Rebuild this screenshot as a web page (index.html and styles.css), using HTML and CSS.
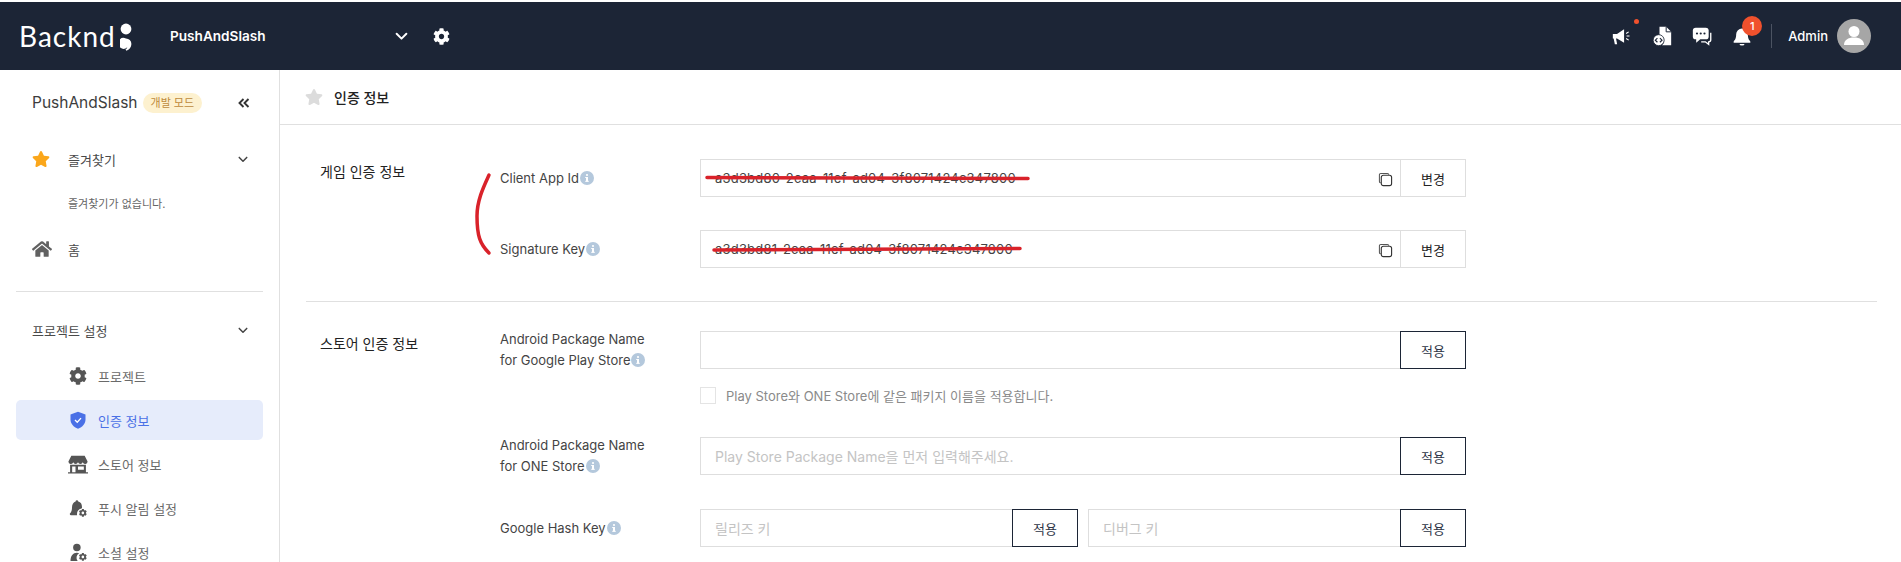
FILE: index.html
```html
<!DOCTYPE html>
<html lang="ko">
<head>
  <meta charset="utf-8" />
  <title>인증 정보</title>
  <link rel="stylesheet" href="styles.css">
</head>
<body>
<svg class="defs" width="0" height="0">
  <symbol id="i-star" viewBox="0 0 576 512"><path d="M259.3 17.8L194 150.2 47.9 171.5c-26.2 3.8-36.7 36.1-17.7 54.6l105.7 103-25 145.5c-4.5 26.3 23.2 46 46.4 33.7L288 439.6l130.7 68.7c23.2 12.2 50.9-7.4 46.4-33.7l-25-145.5 105.7-103c19-18.5 8.5-50.8-17.7-54.6L382 150.2 316.7 17.8c-11.7-23.6-45.6-23.9-57.4 0z"/></symbol>
  <symbol id="i-cog" viewBox="0 0 512 512"><path d="M487.4 315.7l-42.6-24.6c4.3-23.2 4.3-47 0-70.2l42.6-24.6c4.9-2.8 7.1-8.6 5.5-14-11.1-35.6-30-67.8-54.7-94.6-3.8-4.1-10-5.1-14.8-2.3L380.8 110c-17.9-15.4-38.5-27.3-60.8-35.1V25.8c0-5.6-3.9-10.5-9.4-11.7-36.7-8.2-74.3-7.8-109.2 0-5.5 1.2-9.4 6.1-9.4 11.7V75c-22.2 7.9-42.8 19.8-60.8 35.1L88.7 85.5c-4.9-2.8-11-1.9-14.8 2.3-24.7 26.7-43.6 58.9-54.7 94.6-1.7 5.4.6 11.2 5.5 14L67.3 221c-4.3 23.2-4.3 47 0 70.2l-42.6 24.6c-4.9 2.8-7.1 8.6-5.5 14 11.1 35.6 30 67.8 54.7 94.6 3.8 4.1 10 5.1 14.8 2.3l42.6-24.6c17.9 15.4 38.5 27.3 60.8 35.1v49.2c0 5.6 3.9 10.5 9.4 11.7 36.7 8.2 74.3 7.8 109.2 0 5.5-1.2 9.4-6.1 9.4-11.7v-49.2c22.2-7.9 42.8-19.8 60.8-35.1l42.6 24.6c4.9 2.8 11 1.9 14.8-2.3 24.7-26.7 43.6-58.9 54.7-94.6 1.5-5.5-.7-11.3-5.6-14.1zM256 336c-44.1 0-80-35.9-80-80s35.9-80 80-80 80 35.9 80 80-35.9 80-80 80z"/></symbol>
  <symbol id="i-home" viewBox="0 0 576 512"><path d="M280.37 148.26L96 300.11V464a16 16 0 0 0 16 16l112.06-.29a16 16 0 0 0 15.92-16V368a16 16 0 0 1 16-16h64a16 16 0 0 1 16 16v95.64a16 16 0 0 0 16 16.05L464 480a16 16 0 0 0 16-16V300L295.67 148.26a12.19 12.19 0 0 0-15.3 0zM571.6 251.47L488 182.56V44.05a12 12 0 0 0-12-12h-56a12 12 0 0 0-12 12v72.61L318.47 43a48 48 0 0 0-61 0L4.34 251.47a12 12 0 0 0-1.6 16.9l25.5 31A12 12 0 0 0 45.15 301l235.22-193.74a12.19 12.19 0 0 1 15.3 0L530.9 301a12 12 0 0 0 16.9-1.6l25.5-31a12 12 0 0 0-1.7-16.93z"/></symbol>
  <symbol id="i-chev" viewBox="0 0 12 8"><path d="M1.5 1.5L6 6l4.5-4.5" fill="none" stroke="currentColor" stroke-width="1.8" stroke-linecap="round" stroke-linejoin="round"/></symbol>
  <symbol id="i-info" viewBox="0 0 14 14"><circle cx="7" cy="7" r="7" fill="#b4c8dc"/><rect x="6" y="6" width="2" height="4.5" fill="#fff"/><rect x="5.2" y="6" width="2" height="1" fill="#fff"/><rect x="5.2" y="9.8" width="3.6" height="1" fill="#fff"/><circle cx="7" cy="4" r="1.1" fill="#fff"/></symbol>
  <symbol id="i-copy" viewBox="0 0 16 16"><path d="M3 11.5A1.5 1.5 0 0 1 1.5 10V3A1.5 1.5 0 0 1 3 1.5h7A1.5 1.5 0 0 1 11.5 3" fill="none" stroke="#555" stroke-width="1.1"/><rect x="3.5" y="3.5" width="11" height="11" rx="2.2" fill="#fff" stroke="#333" stroke-width="1.2"/></symbol>
</svg>

<header class="topbar">
  <div class="logo">
    <span class="logo-text">Backnd</span>
    <svg class="logo-mark" viewBox="0 0 12 28"><circle cx="6" cy="6" r="5.4"/><path d="M6 15.5a5.4 5.4 0 0 1 5.4 5.4c0 3.4-2.2 5.8-5 6.8l-.9-1.3c1-.6 1.6-1.2 1.8-2.1A5.4 5.4 0 1 1 6 15.5z"/></svg>
  </div>
  <div class="project-select">
    <span>PushAndSlash</span>
    <svg class="chev"><use href="#i-chev"/></svg>
  </div>
  <svg class="top-cog"><use href="#i-cog"/></svg>

  <div class="top-right">
    <div class="top-icon">
      <svg viewBox="0 0 24 24"><path d="M1 9.5h5L14.5 4v16L6 15H4.8l1.4 6.8H3.4L2 15H1z" fill="#fff"/><path d="M17 9l3-2M17.5 12h3.5M17 15l3 2" stroke="#fff" stroke-width="1.3"/></svg>
      <i class="dot"></i>
    </div>
    <div class="top-icon">
      <svg viewBox="0 0 24 24"><path d="M9 1h8l6 6v16H12a7 7 0 0 0-3-12z" fill="#fff"/><path d="M17 1v6h6" fill="none" stroke="#1c2536" stroke-width="1.2"/><circle cx="8" cy="17" r="6.6" fill="#fff" stroke="#1c2536" stroke-width="1"/><path d="M6.5 14.5L4 17l2.5 2.5M9.5 14.5L12 17l-2.5 2.5" fill="none" stroke="#1c2536" stroke-width="1.4"/></svg>
    </div>
    <div class="top-icon">
      <svg viewBox="0 0 24 24"><rect x="1" y="2" width="19" height="14" rx="3.5" fill="#fff"/><path d="M5 15v5l5-4z" fill="#fff"/><circle cx="6" cy="9" r="1.3" fill="#1c2536"/><circle cx="10.5" cy="9" r="1.3" fill="#1c2536"/><circle cx="15" cy="9" r="1.3" fill="#1c2536"/><path d="M22.5 8v8.5a2.5 2.5 0 0 1-2.5 2.5v3l-4-3h-5" fill="none" stroke="#fff" stroke-width="1.6"/></svg>
    </div>
    <div class="top-icon">
      <svg viewBox="0 0 24 24"><path d="M12 3a7 7 0 0 1 7 7c0 5 1.5 7 3 8.5V20H2v-1.5C3.500 17 5 15 5 10a7 7 0 0 1 7-7z" fill="#fff"/><path d="M9 21.500h6a3 2 0 0 1-6 0z" fill="#fff"/></svg>
      <b class="count">1</b>
    </div>
    <span class="top-sep"></span>
    <span class="admin">Admin</span>
    <span class="avatar">
      <svg viewBox="0 0 34 34"><circle cx="17" cy="12.500" r="5.500" fill="#fff"/><path d="M7 26c0-5 4-7.500 10-7.500S27 21 27 26z" fill="#fff"/></svg>
    </span>
  </div>
</header>

<div class="layout">
  <aside class="sidebar">
    <div class="side-title">
      <span class="side-name">PushAndSlash</span>
      <span class="badge">개발 모드</span>
      <svg class="collapse" viewBox="0 0 12 10"><path d="M5.500 1L1.500 5l4 4M10.500 1l-4 4 4 4" fill="none" stroke="#333" stroke-width="1.9"/></svg>
    </div>

    <div class="nav-row">
      <svg class="nav-icon star"><use href="#i-star"/></svg>
      <span>즐겨찾기</span>
      <svg class="chev"><use href="#i-chev"/></svg>
    </div>
    <p class="nav-empty">즐겨찾기가 없습니다.</p>
    <div class="nav-row home-row">
      <svg class="nav-icon home"><use href="#i-home"/></svg>
      <span>홈</span>
    </div>

    <hr class="side-line" />

    <div class="nav-row group-row">
      <span>프로젝트 설정</span>
      <svg class="chev"><use href="#i-chev"/></svg>
    </div>

    <ul class="sub-nav">
      <li>
        <svg class="sub-icon"><use href="#i-cog"/></svg>
        <span>프로젝트</span>
      </li>
      <li class="active">
        <svg class="sub-icon" viewBox="0 0 24 24"><path d="M12 1l10 3.500V11c0 6-4 10.500-10 12.500C6 21.500 2 17 2 11V4.500z" fill="#4a70e6"/><path d="M8 12l3 3 5-5.500" fill="none" stroke="#fff" stroke-width="1.800"/></svg>
        <span>인증 정보</span>
      </li>
      <li>
        <svg class="sub-icon store-icon" viewBox="0 0 24 24"><path d="M4 2h16l3.500 7a3 3 0 0 1-5.800 1 3 3 0 0 1-5.700 0 3 3 0 0 1-5.700 0A3 3 0 0 1 .500 9z" fill="#555"/><path d="M2.500 13h19v9H24v1.500H0V22h2.500zM5 15v7h4v-7zm7 0v4h7v-4z" fill="#555"/></svg>
        <span>스토어 정보</span>
      </li>
      <li>
        <svg class="sub-icon" viewBox="0 0 24 24"><path d="M10.500 1.500a1.800 1.800 0 0 1 1.800 1.700c3.400.8 5 3.500 5 7v2a8 8 0 0 0-6.500 9.300H2.500a1.500 1.500 0 0 1-1-2.500C3 17.500 4 15.500 4 11c0-4 2-7 4.800-7.800a1.800 1.800 0 0 1 1.700-1.700z" fill="#555"/><use href="#i-cog" x="13" y="13" width="11" height="11" fill="#555"/></svg>
        <span>푸시 알림 설정</span>
      </li>
      <li>
        <svg class="sub-icon" viewBox="0 0 24 24"><circle cx="10.500" cy="6" r="5" fill="#555"/><path d="M2 24c0-7 3.500-11 8.500-11 1.500 0 2.500.3 3 .6A7 7 0 0 0 11.500 24z" fill="#555"/><use href="#i-cog" x="13" y="13" width="11" height="11" fill="#555"/></svg>
        <span>소셜 설정</span>
      </li>
    </ul>
  </aside>

  <main class="content">
    <div class="page-head">
      <svg class="page-star"><use href="#i-star"/></svg>
      <span>인증 정보</span>
    </div>

    <section class="block">
      <h2>게임 인증 정보</h2>
      <div class="rows">
        <div class="row">
          <label>Client App Id<svg class="info"><use href="#i-info"/></svg></label>
          <div class="field">
            <div class="box">
              <span class="value">a3d3bd80-2caa-11ef-ad04-3f8071424c347800</span>
              <svg class="copy"><use href="#i-copy"/></svg>
            </div>
            <button class="btn plain">변경</button>
          </div>
        </div>
        <div class="row">
          <label>Signature Key<svg class="info"><use href="#i-info"/></svg></label>
          <div class="field">
            <div class="box">
              <span class="value">a3d3bd81-2caa-11ef-ad04-3f8071424c347800</span>
              <svg class="copy"><use href="#i-copy"/></svg>
            </div>
            <button class="btn plain">변경</button>
          </div>
        </div>
      </div>
    </section>

    <section class="block store">
      <h2>스토어 인증 정보</h2>
      <div class="rows">
        <div class="row">
          <label>Android Package Name<br />for Google Play Store<svg class="info"><use href="#i-info"/></svg></label>
          <div class="field">
            <input class="box" type="text" />
            <button class="btn">적용</button>
          </div>
          <div class="check-row">
            <span class="check"></span>
            <span>Play Store와 ONE Store에 같은 패키지 이름을 적용합니다.</span>
          </div>
        </div>
        <div class="row">
          <label>Android Package Name<br />for ONE Store<svg class="info"><use href="#i-info"/></svg></label>
          <div class="field">
            <input class="box" type="text" placeholder="Play Store Package Name을 먼저 입력해주세요." />
            <button class="btn">적용</button>
          </div>
        </div>
        <div class="row hash">
          <label>Google Hash Key<svg class="info"><use href="#i-info"/></svg></label>
          <div class="field-pair">
            <div class="field">
              <input class="box" type="text" placeholder="릴리즈 키" />
              <button class="btn">적용</button>
            </div>
            <div class="field">
              <input class="box" type="text" placeholder="디버그 키" />
              <button class="btn">적용</button>
            </div>
          </div>
        </div>
      </div>
    </section>
  </main>
</div>

<!-- red pen marks drawn over the screenshot -->
<svg class="pen" viewBox="0 0 1901 562">
  <path d="M489 175C484 186 477 200 477 216C477 236 480 244 489 253"/>
  <path d="M707 177.500L1028 178.500"/>
  <path d="M714 250L1020 248.500"/>
</svg>
</body>
</html>
```

FILE: styles.css
```css
* { margin: 0; padding: 0; box-sizing: border-box; }
html, body { height: 562px; overflow: hidden; }
body { position: relative; padding-top: 2px; background: #fff; color: #333; font-size: 13px; font-family: Inter, "Noto Sans CJK KR", sans-serif; }
ul { list-style: none; }
.defs { position: absolute; }

/* top bar */
.topbar { height: 68px; display: flex; align-items: center; background: #1c2536; color: #fff; }
.logo { width: 170px; padding-left: 19px; display: flex; align-items: center; gap: 4px; }
.logo-text { font-family: Lato, sans-serif; font-weight: 400; font-size: 28px; letter-spacing: 1px; line-height: 34px; }
.logo-mark { width: 12px; height: 28px; fill: #fff; flex: none; margin-top: 2px; }
.project-select { width: 238px; display: flex; align-items: center; justify-content: space-between; font-size: 13.6px; font-weight: 600; }
.chev { width: 10px; height: 7px; color: #444; flex: none; }
.project-select .chev { color: #fff; width: 13px; height: 9px; }
.top-cog { width: 17px; height: 17px; fill: #fff; margin-left: 25px; }
.top-right { margin-left: auto; padding-right: 30px; display: flex; align-items: center; gap: 20px; }
.top-icon { position: relative; width: 20px; height: 20px; }
.top-icon svg { width: 20px; height: 20px; display: block; }
.dot { position: absolute; top: -7px; right: -7px; width: 5px; height: 5px; border-radius: 50%; background: #f0512d; }
.count { position: absolute; top: -10px; left: 10px; width: 20px; height: 20px; line-height: 20px; text-align: center; border-radius: 50%; background: #f0512d; color: #fff; font-size: 11px; font-weight: 500; }
.top-sep { width: 1px; height: 24px; background: #4b5362; margin-left: -1px; }
.admin { font-size: 13px; font-weight: 500; margin-left: -4px; }
.avatar { width: 34px; height: 34px; border-radius: 50%; background: #a6a6a6; margin-left: -11px; }
.avatar svg { display: block; width: 34px; height: 34px; }

/* sidebar */
.layout { display: flex; height: 492px; }
.sidebar { width: 280px; flex: none; border-right: 1px solid #e0e0e0; padding: 0 16px; overflow: hidden; }
.side-title { height: 65px; padding-left: 16px; display: flex; align-items: center; }
.side-name { font-size: 15.5px; color: #3d3d3d; }
.badge { margin-left: 5px; height: 20px; line-height: 20px; padding: 0 8px; border-radius: 10px; background: #fdf1cf; color: #bd8a3c; font-size: 11px; }
.collapse { width: 12px; height: 10px; margin-left: auto; margin-right: 13px; }
.nav-row { height: 40px; margin-top: 4px; padding-left: 16px; display: flex; align-items: center; color: #4a4a4a; }
.nav-row .chev { margin-left: auto; margin-right: 15px; }
.nav-icon { width: 18px; height: 16px; fill: #616161; margin-right: 18px; flex: none; }
.nav-icon.home { width: 20px; height: 18px; margin-right: 16px; }
.star { fill: #fba71b; }
.nav-empty { height: 46px; margin-top: 2px; line-height: 46px; padding-left: 52px; font-size: 11px; color: #666; }
.nav-row.home-row { margin-top: 2px; }
.side-line { border: 0; border-top: 1px solid #e0e0e0; margin-top: 22px; }
.nav-row.group-row { margin-top: 18px; }
.sub-nav { margin-top: 6px; display: flex; flex-direction: column; gap: 4px; }
.sub-nav li { height: 40px; padding-left: 53px; display: flex; align-items: center; gap: 11px; color: #6a6a6a; border-radius: 5px; font-size: 13px; }
.sub-nav li.active { background: #e6ecfb; color: #4a70e6; }
.sub-icon { width: 18px; height: 18px; fill: #555; flex: none; }
.store-icon { width: 20px; height: 20px; margin: 0 -1px; }

/* main area */
.content { flex: 1; min-width: 0; }
.page-head { height: 55px; padding: 0 0 1px 25px; border-bottom: 1px solid #e0e0e0; display: flex; align-items: center; gap: 11px; font-size: 14px; font-weight: 500; color: #222; }
.page-star { width: 18px; height: 16px; fill: #dcdcdc; flex: none; margin-top: 1px; }
.block { margin: 0 24px 0 26px; padding: 34px 0 33px 14px; border-bottom: 1px solid #e0e0e0; display: grid; grid-template-columns: 180px 1fr; }
.block.store { padding-top: 29px; border-bottom: 0; }
.block h2 { font-size: 14px; font-weight: 400; line-height: 26px; color: #222; }
.rows { display: flex; flex-direction: column; gap: 33px; }
.row { display: grid; grid-template-columns: 200px 766px; align-items: center; }
.row label { line-height: 21px; margin: -2px 0; color: #444; }
.row.hash { margin-top: 1px; }
.info { width: 14px; height: 14px; margin-left: 1px; vertical-align: -2px; }
.field { display: flex; height: 38px; }
.field-pair { display: grid; grid-template-columns: 378px 378px; gap: 10px; }
.box { flex: 1; min-width: 0; height: 38px; display: flex; align-items: center; justify-content: space-between; padding: 0 14px; border: 1px solid #dedede; border-right: 0; font: inherit; font-size: 14px; color: #444; outline: none; background: #fff; }
.box::placeholder { color: #c4c4c4; }
.value { font-size: 13px; letter-spacing: 0.2px; }
.copy { width: 15px; height: 15px; margin-right: -7px; margin-top: 2px; }
.btn { width: 66px; flex: none; border: 1px solid #1c2536; background: #fff; font: inherit; color: #2c3345; }
.btn.plain { border-color: #dedede; color: #222; }
.check-row { grid-column: 2; margin-top: 18px; height: 17px; display: flex; align-items: center; gap: 10px; font-size: 13px; color: #8a8a8a; }
.check { width: 16px; height: 17px; border: 1px solid #e4e4e4; }

/* pen marks */
.pen { position: absolute; top: 0; left: 0; width: 1901px; height: 562px; fill: none; stroke: #d9222a; stroke-width: 3.5px; stroke-linecap: round; pointer-events: none; }
```
